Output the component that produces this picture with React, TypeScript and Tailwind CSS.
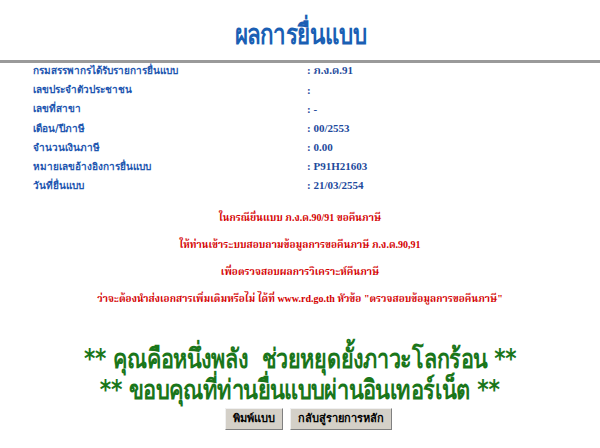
const rows: [string, string][] = [
  ["กรมสรรพากรได้รับรายการยื่นแบบ", ": ภ.ง.ด.91"],
  ["เลขประจำตัวประชาชน", ":"],
  ["เลขที่สาขา", ": -"],
  ["เดือน/ปีภาษี", ": 00/2553"],
  ["จำนวนเงินภาษี", ": 0.00"],
  ["หมายเลขอ้างอิงการยื่นแบบ", ": P91H21603"],
  ["วันที่ยื่นแบบ", ": 21/03/2554"],
];

const notes = [
  "ในกรณียื่นแบบ ภ.ง.ด.90/91 ขอคืนภาษี",
  "ให้ท่านเข้าระบบสอบถามข้อมูลการขอคืนภาษี ภ.ง.ด.90,91",
  "เพื่อตรวจสอบผลการวิเคราะห์คืนภาษี",
  'ว่าจะต้องนำส่งเอกสารเพิ่มเติมหรือไม่ ได้ที่ www.rd.go.th หัวข้อ "ตรวจสอบข้อมูลการขอคืนภาษี"',
];

const btn =
  "h-[22px] px-[7px] text-[11px] font-bold text-black bg-[#d4d0c8] border border-t-[#f0f0f0] border-l-[#f0f0f0] border-b-[#808080] border-r-[#808080]";

export default function App() {
  return (
    <div className="w-[600px] h-[448px] bg-white overflow-hidden font-['Tahoma','DejaVu_Sans',sans-serif]">
      <div className="pt-[18px] h-[60px] flex justify-center">
        <h1 className="scale-x-[0.8] text-[28px] tracking-[-0.5px] leading-[34px] font-bold text-[#1a5fb4] whitespace-nowrap">
          ผลการยื่นแบบ
        </h1>
      </div>
      <div className="h-[3px] bg-[#9a9a9a]" />

      <div className="pl-[33px] flex flex-col -mt-[2px]">
        {rows.map(([label, value]) => (
          <div key={label} className="flex h-[19.2px] items-center">
            <span className="w-[274px] text-[10px] font-bold text-[#1e56b0]">{label}</span>
            <span className="text-[11px] font-bold text-[#1e4a9c] font-['Liberation_Serif','Noto_Serif_Thai','Kinnari','Norasi',serif]">
              {value}
            </span>
          </div>
        ))}
      </div>

      <div className="mt-[15px] flex flex-col items-center gap-[11.5px]">
        {notes.map((n) => (
          <p
            key={n}
            className="h-[15.5px] leading-[15.5px] text-[10px] font-bold text-[#d40000] whitespace-nowrap font-['Liberation_Serif','Noto_Serif_Thai','Kinnari','Norasi',serif]"
          >
            {n}
          </p>
        ))}
      </div>

      <div className="mt-[36px] flex flex-col items-center text-[27px] tracking-[-0.5px] leading-[31px] font-bold text-[#1a761a]">
        <p className="scale-x-[0.8] whitespace-nowrap">** คุณคือหนึ่งพลัง&nbsp; ช่วยหยุดยั้งภาวะโลกร้อน **</p>
        <p className="scale-x-[0.81] whitespace-nowrap">** ขอบคุณที่ท่านยื่นแบบผ่านอินเทอร์เน็ต **</p>
      </div>

      <div className="mt-[3px] pl-[17px] flex justify-center gap-[7px]">
        <button className={btn}>พิมพ์แบบ</button>
        <button className={btn}>กลับสู่รายการหลัก</button>
      </div>
    </div>
  );
}
